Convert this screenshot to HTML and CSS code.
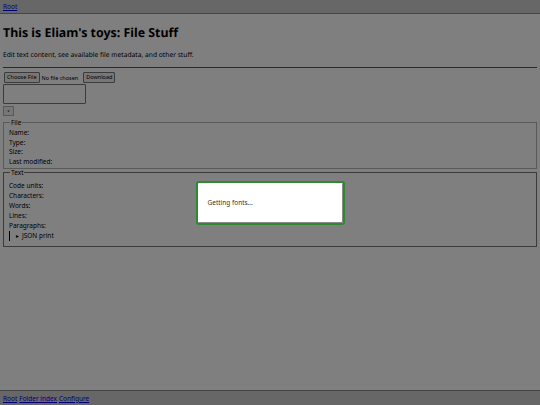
FILE: index.html
```html
<!DOCTYPE html>
<html>
<head>
<meta charset="utf-8">
<link rel="stylesheet" href="styles.css">
</head>
<body>
<header class="topbar"><a href="#">Root</a></header>
<main class="content">
  <h1 class="title">This is Eliam's toys: File Stuff</h1>
  <p class="intro">Edit text content, see available file metadata, and other stuff.</p>
  <hr class="rule">
  <div class="controls">
    <span class="btn">Choose File</span><span class="nofile">No file chosen</span><span class="btn">Download</span>
  </div>
  <div class="textarea"></div>
  <div class="small-btn">∨</div>
  <fieldset class="box box-file">
    <legend>File</legend>
    <div class="line">Name:</div>
    <div class="line">Type:</div>
    <div class="line">Size:</div>
    <div class="line">Last modified:</div>
  </fieldset>
  <fieldset class="box box-text">
    <legend>Text</legend>
    <div class="line">Code units:</div>
    <div class="line">Characters:</div>
    <div class="line">Words:</div>
    <div class="line">Lines:</div>
    <div class="line">Paragraphs:</div>
    <div class="details"><span class="tri">►</span>JSON print</div>
  </fieldset>
</main>
<footer class="footbar"><a href="#">Root</a> <a href="#">Folder index</a> <a href="#">Configure</a></footer>
<div class="overlay">
  <div class="dialog">Getting fonts...</div>
</div>
</body>
</html>
```

FILE: styles.css
```css
html, body { height: 100%; }
body {
  margin: 0;
  font-family: "Noto Sans", "Open Sans", sans-serif;
  font-size: 7px;
  color: #000;
  background: #fff;
  display: flex;
  flex-direction: column;
}
a { color: #0000ee; }
.topbar {
  height: 14px;
  background: #cfcfcf;
  border-bottom: 1px solid #8a8a8a;
  padding-left: 3px;
  display: flex;
  align-items: center;
  font-size: 6.5px;
  box-sizing: border-box;
}
.content { flex: 1; padding: 0 3px; }
.title {
  font-size: 12.4px;
  text-rendering: geometricPrecision;
  font-weight: bold;
  margin: 9px 0 0;
  line-height: 20px;
}
.intro { margin: 7px 0 0; line-height: 10px; font-size: 6.7px; text-rendering: geometricPrecision; }
.rule { margin: 7px 0 0; border: 0; border-top: 1px solid #555; }
.controls { display: flex; align-items: center; gap: 2px; margin-top: 4px; padding-left: 1px; }
.btn {
  font-size: 5.5px;
  background: #efefef;
  border: 1px solid #767676;
  border-radius: 1px;
  padding: 1px 2px;
  line-height: 7px;
}
.nofile { font-size: 5.5px; margin-right: 3px; }
.textarea {
  width: 81px;
  height: 18px;
  border: 1px solid #767676;
  border-radius: 1px;
  margin-top: 1px;
}
.small-btn {
  width: 9px;
  height: 8px;
  border: 1px solid #b0b0b0;
  background: #efefef;
  font-size: 4px;
  text-align: center;
  line-height: 8px;
  margin-top: 2px;
}
.box {
  margin: 3px 0 0;
  padding: 2px 5px 1px;
  border: 1px solid #b5b5b5;
  font-size: 6.5px;
}
.box-file .line { line-height: 9.7px; }
.box-text { border-color: #777; margin-top: 0; padding-top: 5px; padding-bottom: 5px; }
.box-text .line { line-height: 10px; }
.box legend { padding: 0 1px; line-height: 7px; margin-left: 1px; }
.details {
  line-height: 10px;
  border-left: 1px solid #000;
  padding-left: 5px;
  margin-left: 0;
}
.tri { font-size: 5px; margin-right: 2px; }
.footbar {
  height: 15px;
  background: #cfcfcf;
  border-top: 1px solid #8a8a8a;
  padding-left: 3px;
  display: flex;
  align-items: center;
  gap: 2px;
  font-size: 6.5px;
  box-sizing: border-box;
}
.overlay {
  position: fixed;
  inset: 0;
  background: rgba(0, 0, 0, 0.5);
  display: flex;
  align-items: center;
  justify-content: center;
}
.dialog {
  width: 135px;
  height: 40px;
  background: #fff;
  border: 2px solid #2f8a2f;
  border-radius: 3px;
  box-shadow: inset -1px -1px 0 #888;
  padding-left: 10px;
  display: flex;
  align-items: center;
  font-size: 6.5px;
  color: #333;
}
```
